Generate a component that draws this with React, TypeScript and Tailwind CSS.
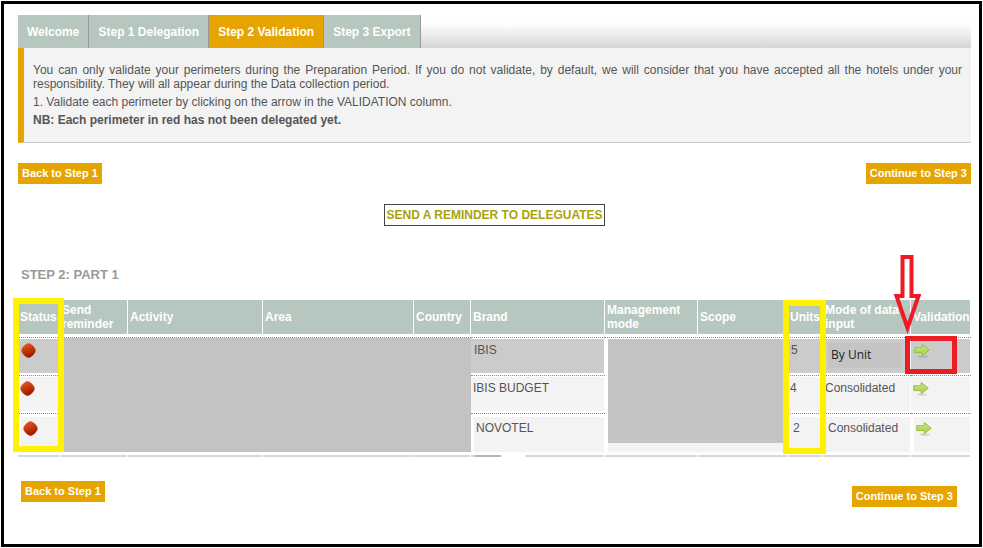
import { FC, ReactNode } from 'react';
import clsx from 'clsx';

interface IPerimeter {
  brand: string;
  units: number;
  mode: string;
  cell: string;
  inner: string;
}

const TABS = ['Welcome', 'Step 1 Delegation', 'Step 2 Validation', 'Step 3 Export'];

const COLUMNS = [
  { label: 'Status', width: 'w-[42px]' },
  { label: 'Send reminder', width: 'w-[68px]' },
  { label: 'Activity', width: 'w-[135px]' },
  { label: 'Area', width: 'w-[151px]' },
  { label: 'Country', width: 'w-[57px]' },
  { label: 'Brand', width: 'w-[134px]' },
  { label: 'Management mode', width: 'w-[93px]' },
  { label: 'Scope', width: 'w-[90px]' },
  { label: 'Units', width: 'w-[35px]' },
  { label: 'Mode of data input', width: 'w-[88px]' },
  { label: 'Validation', width: 'w-[60px]' },
];

const PERIMETERS: IPerimeter[] = [
  {
    brand: 'IBIS',
    units: 5,
    mode: 'By Unit',
    cell: 'h-[38px] pt-px',
    inner: 'h-[34px] bg-[#cbcbcb] pl-[3px]',
  },
  {
    brand: 'IBIS BUDGET',
    units: 4,
    mode: 'Consolidated',
    cell: 'h-[38px] pt-px',
    inner: 'h-[34px] bg-[#f3f3f3] pl-[2px]',
  },
  {
    brand: 'NOVOTEL',
    units: 2,
    mode: 'Consolidated',
    cell: 'h-[42px] pt-[3px]',
    inner: 'ml-[3px] h-[35px] bg-[#f3f3f3] pl-[2px]',
  },
];

const StepLink: FC<{ children: ReactNode }> = ({ children }) => (
  <a
    href="#"
    className="flex h-[21px] items-center bg-[#e6a400] px-1 text-[11px] font-bold whitespace-nowrap text-white"
  >
    {children}
  </a>
);

const StatusIcon: FC = () => (
  <svg className="block h-[15px] w-[15px]" viewBox="0 0 15 15" role="img" aria-label="Not validated">
    <defs>
      <linearGradient id="status" x1="0.3" y1="0" x2="0.65" y2="1">
        <stop offset="0" stopColor="#e05a2a" />
        <stop offset="0.4" stopColor="#cc3c08" />
        <stop offset="1" stopColor="#8e1500" />
      </linearGradient>
    </defs>
    <path
      d="M4.6 1.6Q7.5-.9 10.4 1.6Q12.2 2.8 13.4 4.6Q15.9 7.5 13.4 10.4Q12.2 12.2 10.4 13.4Q7.5 15.9 4.6 13.4Q2.8 12.2 1.6 10.4Q-.9 7.5 1.6 4.6Q2.8 2.8 4.6 1.6Z"
      fill="url(#status)"
    />
  </svg>
);

const ArrowIcon: FC = () => (
  <svg className="block h-4 w-4" viewBox="0 0 16 16" aria-hidden="true">
    <ellipse cx="9" cy="13.6" rx="5" ry="1.4" fill="#000" opacity="0.12" />
    <path
      d="M.8 4.8H8.2V1.6L15.2 7.2L8.2 12.8V9.6H.8Z"
      fill="#b4d95c"
      stroke="#93bf3c"
      strokeLinejoin="round"
    />
    <path d="M1.8 6H9.2V3.8L12.8 6.8" fill="none" stroke="#cbe68a" />
  </svg>
);

const PerimeterTable: FC = () => (
  <table className="w-full table-fixed border-separate border-spacing-0 text-left text-[12px]">
    <thead>
      <tr>
        {COLUMNS.map(({ label, width }) => (
          <th
            key={label}
            className={clsx(
              'relative h-[37px] border-r border-b-[3px] border-white bg-[#b6c7bf] p-0 pl-[2px] align-middle leading-[14px] font-bold text-white',
              width,
            )}
          >
            {label}
            {label === 'Status' && (
              <span className="absolute -top-[2px] -left-[5px] z-10 h-[154px] w-[51px] border-6 border-[#fff200]" />
            )}
            {label === 'Units' && (
              <span className="absolute top-0 -left-[5px] z-10 h-[154px] w-[43px] border-6 border-[#fff200]" />
            )}
            {label === 'Validation' && (
              <svg
                className="absolute -top-[45px] -left-[18px] z-20 h-[80px] w-[29px]"
                viewBox="0 0 29 80"
                aria-hidden="true"
              >
                <path
                  d="M9.5 2H18.5V41H25.5L14.5 73L3.5 41H9.5Z"
                  fill="none"
                  stroke="#ed1c24"
                  strokeWidth="4"
                />
              </svg>
            )}
          </th>
        ))}
      </tr>
    </thead>
    <tbody>
      {PERIMETERS.map(({ brand, units, mode, cell, inner }, index) => {
        const td = clsx('border-t border-dotted border-[#888] p-0 pr-px align-top text-[#555]', cell);
        const box = clsx('pt-1 leading-[14px]', inner);

        return (
          <tr key={brand}>
            <td className={td}>
              <div className={box}>
                <StatusIcon />
              </div>
            </td>
            {index === 0 && (
              <td
                colSpan={4}
                rowSpan={3}
                className="border-t border-dotted border-[#888] p-0 align-top"
              >
                <div className="h-[114px] bg-[#c3c3c3]" />
              </td>
            )}
            <td className={td}>
              <div className={box}>{brand}</div>
            </td>
            {index === 0 && (
              <td
                colSpan={2}
                rowSpan={3}
                className="border-t border-dotted border-[#888] p-0 pt-px pl-[3px] align-top"
              >
                <div className="h-[113px] border-b-9 border-[#f3f3f3] bg-[#c3c3c3]" />
              </td>
            )}
            <td className={td}>
              <div className={box}>{units}</div>
            </td>
            <td className={td}>
              {index === 0 ? (
                <div className="h-[34px] bg-[#cbcbcb] pt-[3px] pl-[5px]">
                  <div className="mr-2 flex h-[26px] items-center bg-[#c4c4c4] pl-[3px] font-['Open_Sans',sans-serif] text-[12px] text-[#222]">
                    {mode}
                  </div>
                </div>
              ) : (
                <div className={box}>{mode}</div>
              )}
            </td>
            <td className={clsx(td, 'relative')}>
              <div className={box}>
                <a href="#" aria-label={`Validate ${brand}`} className="block w-4">
                  <ArrowIcon />
                </a>
              </div>
              {index === 0 && (
                <span className="absolute -top-[2px] -left-[6px] z-10 h-[38px] w-[52px] border-5 border-[#ed1c24]" />
              )}
            </td>
          </tr>
        );
      })}
      <tr>
        {COLUMNS.map(({ label }) => (
          <td key={label} className="p-0 pr-px">
            <div className="h-[2px] bg-[#d8d8d8]">
              {label === 'Brand' && (
                <div className="flex h-[2px] pl-1">
                  <span className="w-[26px] bg-[#b5b5b5]" />
                  <span className="w-6 bg-white" />
                </div>
              )}
            </div>
          </td>
        ))}
      </tr>
    </tbody>
  </table>
);

export default function App() {
  return (
    <div className="flex min-h-screen bg-white p-px font-['Liberation_Sans',Arial,sans-serif]">
      <main className="w-full border-3 border-black pt-[11px] pr-2 pl-[14px]">
        <nav className="flex h-[33px] bg-linear-to-b from-white from-25% to-[#d6d6d6]">
          {TABS.map((tab) => (
            <a
              key={tab}
              href="#"
              className={clsx(
                'flex items-center border-r border-[#999] px-[9px] text-[12px] font-bold whitespace-nowrap text-white',
                tab === 'Step 2 Validation' ? 'bg-[#e6a400]' : 'bg-[#b6c7bf]',
              )}
            >
              {tab}
            </a>
          ))}
        </nav>

        <section className="h-[95px] border-b border-l-6 border-b-[#c8c8c8] border-l-[#e6a400] bg-[#f3f3f3] pt-[15px] pr-[9px] pl-[9px] text-[12px] leading-[14px] text-[#555]">
          <p className="text-justify">
            You can only validate your perimeters during the Preparation Period. If you do not
            validate, by default, we will consider that you have accepted all the hotels under your
            responsibility. They will all appear during the Data collection period.
          </p>
          <p className="mt-1">
            1. Validate each perimeter by clicking on the arrow in the VALIDATION column.
          </p>
          <p className="mt-1 font-bold">NB: Each perimeter in red has not been delegated yet.</p>
        </section>

        <div className="mt-5 flex justify-between">
          <StepLink>Back to Step 1</StepLink>
          <StepLink>Continue to Step 3</StepLink>
        </div>

        <div className="mt-5 flex justify-center">
          <button
            type="button"
            className="h-[22px] border border-[#444] px-px text-[12px] leading-5 font-bold text-[#aaa20c]"
          >
            SEND A REMINDER TO DELEGUATES
          </button>
        </div>

        <h2 className="mt-10 mb-4 pl-[3px] text-[13px] leading-[18px] font-bold text-[#999]">
          STEP 2: PART 1
        </h2>

        <PerimeterTable />

        <div className="mt-6 flex justify-between pr-[14px] pl-[3px]">
          <StepLink>Back to Step 1</StepLink>
          <div className="pt-[5px]">
            <StepLink>Continue to Step 3</StepLink>
          </div>
        </div>
      </main>
    </div>
  );
}
